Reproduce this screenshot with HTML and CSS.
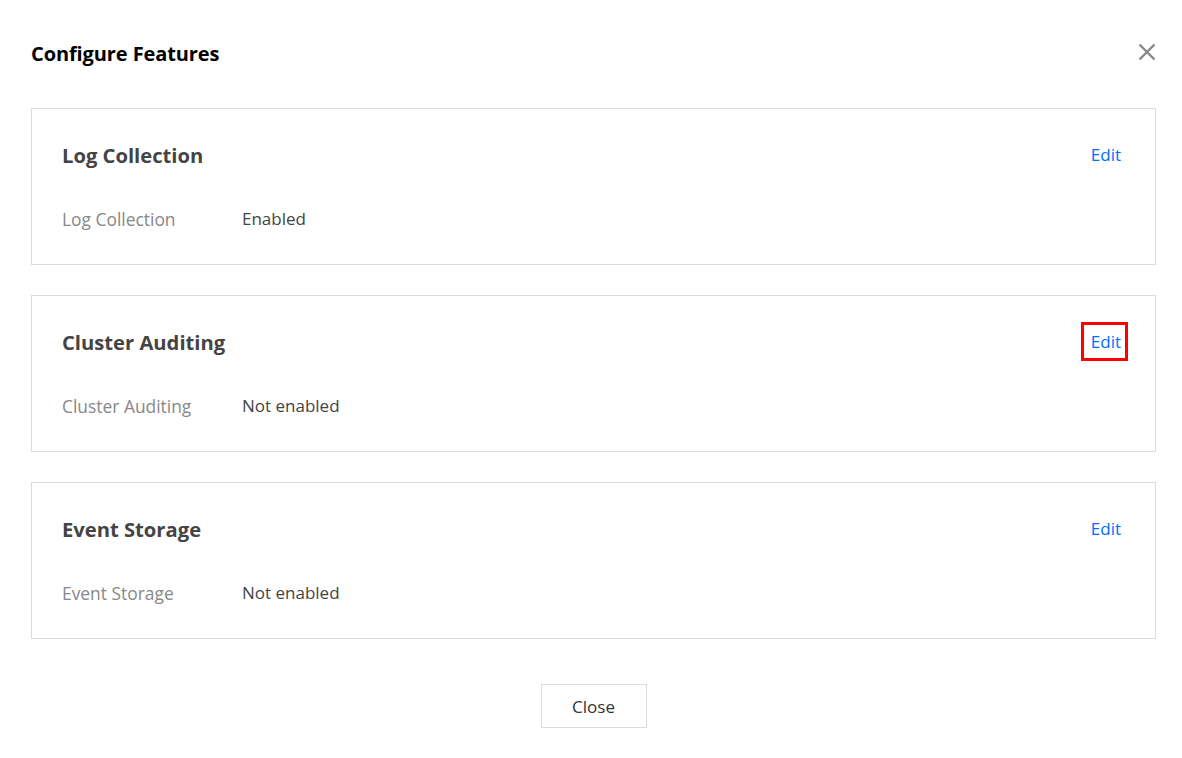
FILE: index.html
```html
<!DOCTYPE html>
<html>
<head>
<meta charset="utf-8">
<link rel="stylesheet" href="styles.css">
</head>
<body>
<div class="dialog">
  <div class="header">
    <h1 class="title">Configure Features</h1>
    <button class="close-x" aria-label="Close">
      <svg width="18" height="18" viewBox="0 0 18 18"><path d="M1.5 1.5 L16.5 16.5 M16.5 1.5 L1.5 16.5" stroke="#888" stroke-width="2.4" fill="none"/></svg>
    </button>
  </div>
  <div class="cards">
    <section class="card">
      <div class="card-head">
        <h2 class="card-title">Log Collection</h2>
        <a class="edit">Edit</a>
      </div>
      <div class="row"><span class="label">Log Collection</span><span class="value">Enabled</span></div>
    </section>
    <section class="card">
      <div class="card-head">
        <h2 class="card-title">Cluster Auditing</h2>
        <a class="edit highlight">Edit</a>
      </div>
      <div class="row"><span class="label">Cluster Auditing</span><span class="value">Not enabled</span></div>
    </section>
    <section class="card">
      <div class="card-head">
        <h2 class="card-title">Event Storage</h2>
        <a class="edit">Edit</a>
      </div>
      <div class="row"><span class="label">Event Storage</span><span class="value">Not enabled</span></div>
    </section>
  </div>
  <div class="footer">
    <button class="btn">Close</button>
  </div>
</div>
</body>
</html>
```
FILE: styles.css
```css
html, body { margin: 0; padding: 0; background: #fff; }
body { font-family: "Open Sans", "Noto Sans", sans-serif; color: #444; }
.dialog { padding: 0 26px 0 31px; width: 1125px; }
.header { display: flex; justify-content: space-between; align-items: center; height: 108px; box-sizing: border-box; }
.title { margin: 0 0 2px 0; font-size: 20px; font-weight: 700; color: #000; letter-spacing: -0.1px; }
.close-x { border: 0; background: none; padding: 0; margin-right: 0; margin-bottom: 4px; width: 18px; height: 18px; display: flex; cursor: pointer; }
.cards { display: flex; flex-direction: column; gap: 30px; }
.card { border: 1px solid #dcdcdc; height: 157px; box-sizing: border-box; padding: 0 34px 0 30px; }
.card-head { display: flex; justify-content: space-between; align-items: center; height: 94px; }
.card-title { margin: 0 0 3px 0; font-size: 20.2px; font-weight: 700; color: #444; letter-spacing: 0; }
.edit { position: relative; font-size: 17px; color: #006eff; cursor: pointer; margin-top: -3px; }
.highlight::after { content: ""; position: absolute; left: -10px; right: -7px; top: -8px; bottom: -8px; border: 3px solid #f00; }
.row { display: flex; font-size: 17px; line-height: 24px; margin-top: 4px; }
.label { width: 180px; color: #888; font-size: 17.4px; }
.value { color: #444; }
.footer { display: flex; justify-content: center; padding-top: 45px; }
.btn { width: 106px; height: 44px; border: 1px solid #dcdcdc; background: #fff; font-family: inherit; font-size: 17px; color: #333; padding: 0; }
```
